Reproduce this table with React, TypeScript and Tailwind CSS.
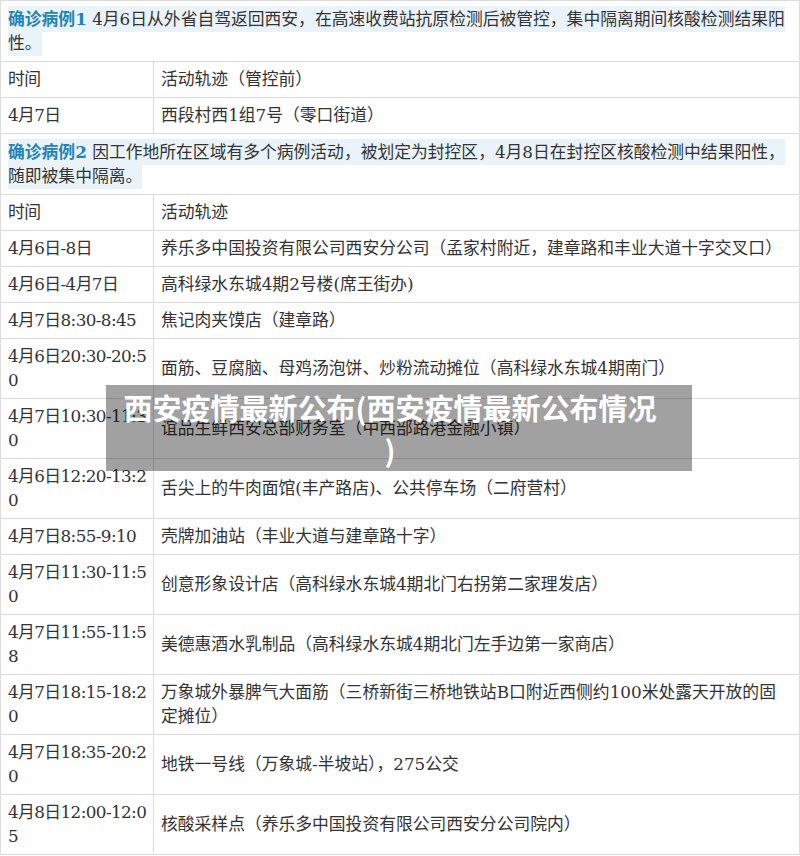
import React from 'react';

type Row = { time: string; place: string };

const case1Rows: Row[] = [
  { time: '时间', place: '活动轨迹（管控前）' },
  { time: '4月7日', place: '西段村西1组7号（零口街道）' },
];

const case2Rows: Row[] = [
  { time: '时间', place: '活动轨迹' },
  { time: '4月6日-8日', place: '养乐多中国投资有限公司西安分公司（孟家村附近，建章路和丰业大道十字交叉口）' },
  { time: '4月6日-4月7日', place: '高科绿水东城4期2号楼(席王街办)' },
  { time: '4月7日8:30-8:45', place: '焦记肉夹馍店（建章路）' },
  { time: '4月6日20:30-20:50', place: '面筋、豆腐脑、母鸡汤泡饼、炒粉流动摊位（高科绿水东城4期南门）' },
  { time: '4月7日10:30-11:30', place: '谊品生鲜西安总部财务室（中西部路港金融小镇）' },
  { time: '4月6日12:20-13:20', place: '舌尖上的牛肉面馆(丰产路店)、公共停车场（二府营村）' },
  { time: '4月7日8:55-9:10', place: '壳牌加油站（丰业大道与建章路十字）' },
  { time: '4月7日11:30-11:50', place: '创意形象设计店（高科绿水东城4期北门右拐第二家理发店）' },
  { time: '4月7日11:55-11:58', place: '美德惠酒水乳制品（高科绿水东城4期北门左手边第一家商店）' },
  { time: '4月7日18:15-18:20', place: '万象城外暴脾气大面筋（三桥新街三桥地铁站B口附近西侧约100米处露天开放的固定摊位）' },
  { time: '4月7日18:35-20:20', place: '地铁一号线（万象城-半坡站），275公交' },
  { time: '4月8日12:00-12:05', place: '核酸采样点（养乐多中国投资有限公司西安分公司院内）' },
];

const CaseHeader = ({ label, text }: { label: string; text: string }) => (
  <tr>
    <td colSpan={2} className="border border-[#dcdcdc] pl-[7px] pr-[4px] pt-[6px] pb-[6px] leading-6">
      <span className="bg-[#eaf3fa] py-[3px] [box-decoration-break:clone]">
        <span className="font-bold text-[#1f84b8]">{label}</span> {text}
      </span>
    </td>
  </tr>
);

const TrackRow = ({ row }: { row: Row }) => (
  <tr>
    <td className="border border-[#dcdcdc] pl-[7px] pr-[2px] pt-[5px] pb-[6px] align-middle leading-6 tracking-[-0.6px] break-all">
      {row.time}
    </td>
    <td className="border border-[#dcdcdc] pl-[7px] pr-[12px] pt-[5px] pb-[6px] align-middle leading-6">
      {row.place}
    </td>
  </tr>
);

export default function App() {
  return (
    <div className="relative h-[856px] w-[800px] overflow-hidden bg-white font-['DejaVu_Serif','Noto_Sans_CJK_SC',serif] text-[16.8px] text-[#333]">
      <table className="w-[800px] table-fixed border-collapse">
        <colgroup>
          <col className="w-[153px]" />
          <col />
        </colgroup>
        <tbody>
          <CaseHeader
            label="确诊病例1"
            text="4月6日从外省自驾返回西安，在高速收费站抗原检测后被管控，集中隔离期间核酸检测结果阳性。"
          />
          {case1Rows.map((r, i) => (
            <TrackRow key={'a' + i} row={r} />
          ))}
          <CaseHeader
            label="确诊病例2"
            text="因工作地所在区域有多个病例活动，被划定为封控区，4月8日在封控区核酸检测中结果阳性，随即被集中隔离。"
          />
          {case2Rows.map((r, i) => (
            <TrackRow key={'b' + i} row={r} />
          ))}
        </tbody>
      </table>

      {/* title overlay */}
      <div className="absolute left-[106px] top-[385px] h-[86px] w-[586px] bg-black/[0.37] pl-[14px] pr-[32px] pt-[1px] text-center font-['Noto_Sans_CJK_SC',sans-serif] text-[29px] font-bold leading-[42px] text-white [line-break:anywhere]">
        西安疫情最新公布(西安疫情最新公布情况)
      </div>
    </div>
  );
}
